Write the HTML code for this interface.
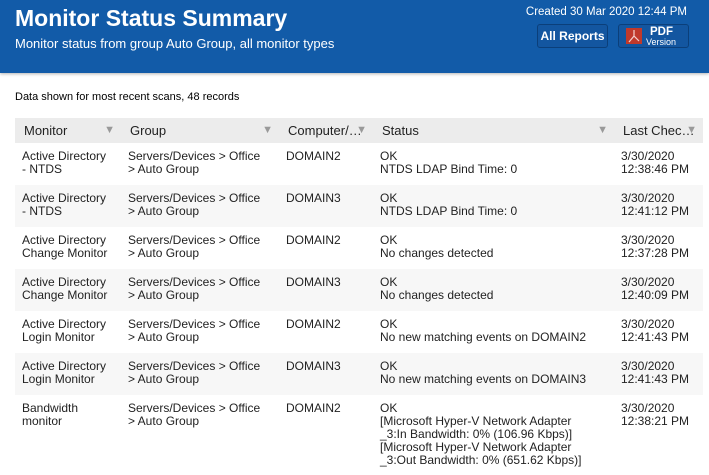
<!DOCTYPE html>
<html><head><meta charset="utf-8"><style>
*{margin:0;padding:0;box-sizing:border-box}
body{width:709px;height:475px;overflow:hidden;background:#fff;font-family:"Liberation Sans",Arial,sans-serif;position:relative}
.hdr{position:absolute;left:0;top:0;width:709px;height:73px;background:#125ba8;box-shadow:0 1px 3px rgba(0,0,0,.3);color:#fff}
.t{position:absolute;left:15px;top:5px;font-size:23px;font-weight:bold}
.s{position:absolute;left:15px;top:36px;font-size:13px}
.c{position:absolute;right:22px;top:6px;font-size:11.5px}
.b{position:absolute;top:24px;height:24px;border:1px solid #0b3f7a;border-radius:3px;background:#1356a0;font-size:12px;font-weight:bold;text-align:center}
.info{position:absolute;left:15px;top:91px;font-size:11px}
table{position:absolute;left:15px;top:118px;width:688px;border-collapse:collapse;font-size:12px;color:#222}
th{background:#ececec;height:25px;text-align:left;font-weight:normal;font-size:13px;color:#222;padding-left:9px;position:relative}
th span{position:absolute;right:6px;top:6px;color:#999;font-size:11px}
td{vertical-align:top;padding:7px 0 0 7px;height:42px;line-height:13px}
tr.g td{background:#f7f7f7}
</style></head><body>
<div class="hdr">
<div class="t">Monitor Status Summary</div>
<div class="s">Monitor status from group Auto Group, all monitor types</div>
<div class="c">Created 30 Mar 2020 12:44 PM</div>
<div class="b" style="left:537px;width:71px;line-height:22px">All Reports</div>
<div class="b" style="left:618px;width:71px">
<div style="position:absolute;left:7px;top:3px;width:16px;height:16px;background:#c0392b"><svg width="16" height="16" viewBox="0 0 16 16"><path d="M8 2 L8 8 L3 14 M8 8 L13 13" stroke="#f4d0cc" stroke-width="1.2" fill="none"/></svg></div>
<div style="position:absolute;left:31px;top:1px;font-size:11.5px;line-height:12px">PDF</div>
<div style="position:absolute;left:27px;top:12px;font-size:9px;font-weight:normal">Version</div>
</div>
</div>
<div class="info">Data shown for most recent scans, 48 records</div>
<table>
<colgroup><col style="width:106px"><col style="width:158px"><col style="width:94px"><col style="width:241px"><col></colgroup>
<tr><th>Monitor<span>▼</span></th><th>Group<span>▼</span></th><th>Computer/…<span>▼</span></th><th>Status<span>▼</span></th><th>Last Chec…<span>▼</span></th></tr>
<tr><td>Active Directory<br>- NTDS</td><td>Servers/Devices &gt; Office<br>&gt; Auto Group</td><td>DOMAIN2</td><td>OK<br>NTDS LDAP Bind Time: 0</td><td>3/30/2020<br>12:38:46 PM</td></tr>
<tr class="g"><td>Active Directory<br>- NTDS</td><td>Servers/Devices &gt; Office<br>&gt; Auto Group</td><td>DOMAIN3</td><td>OK<br>NTDS LDAP Bind Time: 0</td><td>3/30/2020<br>12:41:12 PM</td></tr>
<tr><td>Active Directory<br>Change Monitor</td><td>Servers/Devices &gt; Office<br>&gt; Auto Group</td><td>DOMAIN2</td><td>OK<br>No changes detected</td><td>3/30/2020<br>12:37:28 PM</td></tr>
<tr class="g"><td>Active Directory<br>Change Monitor</td><td>Servers/Devices &gt; Office<br>&gt; Auto Group</td><td>DOMAIN3</td><td>OK<br>No changes detected</td><td>3/30/2020<br>12:40:09 PM</td></tr>
<tr><td>Active Directory<br>Login Monitor</td><td>Servers/Devices &gt; Office<br>&gt; Auto Group</td><td>DOMAIN2</td><td>OK<br>No new matching events on DOMAIN2</td><td>3/30/2020<br>12:41:43 PM</td></tr>
<tr class="g"><td>Active Directory<br>Login Monitor</td><td>Servers/Devices &gt; Office<br>&gt; Auto Group</td><td>DOMAIN3</td><td>OK<br>No new matching events on DOMAIN3</td><td>3/30/2020<br>12:41:43 PM</td></tr>
<tr><td style="height:75px">Bandwidth<br>monitor</td><td>Servers/Devices &gt; Office<br>&gt; Auto Group</td><td>DOMAIN2</td><td>OK<br>[Microsoft Hyper-V Network Adapter<br>_3:In Bandwidth: 0% (106.96 Kbps)]<br>[Microsoft Hyper-V Network Adapter<br>_3:Out Bandwidth: 0% (651.62 Kbps)]</td><td>3/30/2020<br>12:38:21 PM</td></tr>
</table>
</body></html>
